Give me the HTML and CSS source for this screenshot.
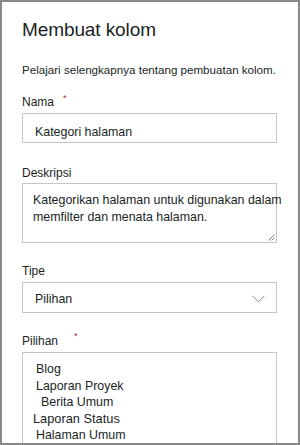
FILE: index.html
```html
<!DOCTYPE html>
<html lang="id">
<head>
<meta charset="utf-8">
<link rel="stylesheet" href="styles.css">
</head>
<body>
<div class="panel">
  <h1 class="title">Membuat kolom</h1>
  <p class="desc">Pelajari selengkapnya tentang pembuatan kolom.</p>

  <div class="label label-first">Nama<span class="req req-nama">*</span></div>
  <div class="field input">Kategori halaman</div>

  <div class="label label-desc">Deskripsi</div>
  <div class="field textarea">Kategorikan halaman untuk digunakan dalam<br>memfilter dan menata halaman.
    <svg class="grip" width="8" height="8" viewBox="0 0 8 8"><path d="M7.5 1.5 L1.5 7.5 M7.5 4.5 L4.5 7.5" stroke="#8a8886" stroke-width="1" fill="none"/></svg>
  </div>

  <div class="label">Tipe</div>
  <div class="field select"><span>Pilihan</span>
    <svg class="chev" width="13" height="8" viewBox="0 0 13 8"><path d="M0.5 0.8 L6.5 6.8 L12.5 0.8" stroke="#8a8886" stroke-width="1" fill="none"/></svg>
  </div>

  <div class="label">Pilihan<span class="req req-pilihan">*</span></div>
  <div class="field list">
    <div class="item">Blog</div>
    <div class="item">Laporan Proyek</div>
    <div class="item item-in">Berita Umum</div>
    <div class="item item-out">Laporan Status</div>
    <div class="item">Halaman Umum</div>
  </div>
</div>
</body>
</html>
```
FILE: styles.css
```css
html, body {
  margin: 0;
  padding: 0;
  background: #ffffff;
}
body {
  font-family: "Liberation Sans", Arial, sans-serif;
  color: #201f1e;
}
.panel {
  box-sizing: border-box;
  width: 300px;
  height: 445px;
  border: 2px solid #8a8886;
  padding: 15px 21px 0 20px;
  overflow: hidden;
  display: flex;
  flex-direction: column;
}
.title {
  margin: 0;
  font-size: 19px;
  line-height: 26px;
  font-weight: normal;
  letter-spacing: -0.1px;
}
.desc {
  margin: 19px 0 0 0;
  font-size: 11.6px;
  line-height: 16px;
}
.label {
  font-size: 12px;
  line-height: 16px;
  margin-top: 20px;
  margin-bottom: 3px;
  display: flex;
  align-items: flex-start;
}
.label-first {
  margin-top: 16px;
}
.label-desc {
  margin-top: 22px;
  margin-bottom: 2px;
}
.req {
  color: #a4262c;
  font-size: 9px;
  line-height: 9px;
  margin-top: 0;
}
.req-nama {
  margin-left: 9px;
}
.req-pilihan {
  margin-left: 16px;
  margin-top: -1px;
}
.field {
  box-sizing: border-box;
  width: 255px;
  border: 1px solid #c8c6c4;
  font-size: 12.4px;
  line-height: 16px;
  flex-shrink: 0;
}
.input {
  height: 30px;
  padding: 10px 12px 0 12px;
}
.textarea {
  position: relative;
  height: 60px;
  padding: 8px 10px 0 10px;
  line-height: 17px;
  white-space: nowrap;
}
.grip {
  position: absolute;
  right: 1px;
  bottom: 1px;
}
.select {
  height: 31px;
  padding: 8px 11px 0 12px;
  display: flex;
  justify-content: space-between;
  align-items: flex-start;
}
.chev {
  margin-top: 4px;
}
.list {
  height: 200px;
  padding: 8px 10px 0 13px;
  line-height: 16.5px;
}
.item-in {
  margin-left: 5px;
}
.item-out {
  margin-left: -3px;
  font-size: 12.8px;
}
```
